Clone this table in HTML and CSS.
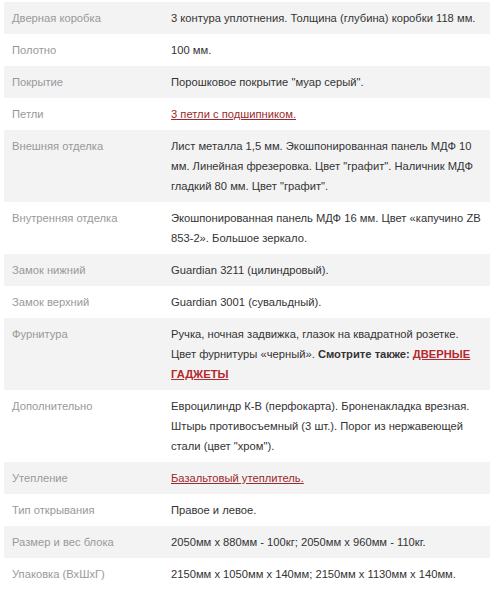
FILE: index.html
```html
<!DOCTYPE html>
<html lang="ru">
<head>
<meta charset="utf-8">
<link rel="stylesheet" href="styles.css">
</head>
<body>
<table class="specs">
<colgroup><col class="ck"><col class="cv"></colgroup>
<tr class="odd"><td class="k">Дверная коробка</td><td class="v">3 контура уплотнения. Толщина (глубина) коробки 118 мм.</td></tr>
<tr><td class="k">Полотно</td><td class="v">100 мм.</td></tr>
<tr class="odd"><td class="k">Покрытие</td><td class="v">Порошковое покрытие "муар серый".</td></tr>
<tr><td class="k">Петли</td><td class="v"><a class="lnk" href="#">3 петли с подшипником.</a></td></tr>
<tr class="odd"><td class="k">Внешняя отделка</td><td class="v">Лист металла 1,5 мм. Экошпонированная панель МДФ 10 мм. Линейная фрезеровка. Цвет "графит". Наличник МДФ гладкий 80 мм. Цвет "графит".</td></tr>
<tr><td class="k">Внутренняя отделка</td><td class="v">Экошпонированная панель МДФ 16 мм. Цвет «капучино ZB 853-2». Большое зеркало.</td></tr>
<tr class="odd"><td class="k">Замок нижний</td><td class="v">Guardian 3211 (цилиндровый).</td></tr>
<tr><td class="k">Замок верхний</td><td class="v">Guardian 3001 (сувальдный).</td></tr>
<tr class="odd"><td class="k">Фурнитура</td><td class="v">Ручка, ночная задвижка, глазок на квадратной розетке. Цвет фурнитуры «черный». <b>Смотрите также: <a class="lnk strong" href="#">ДВЕРНЫЕ ГАДЖЕТЫ</a></b></td></tr>
<tr><td class="k">Дополнительно</td><td class="v">Евроцилиндр К-В (перфокарта). Броненакладка врезная. Штырь противосъемный (3 шт.). Порог из нержавеющей стали (цвет "хром").</td></tr>
<tr class="odd"><td class="k">Утепление</td><td class="v"><a class="lnk" href="#">Базальтовый утеплитель.</a></td></tr>
<tr><td class="k">Тип открывания</td><td class="v">Правое и левое.</td></tr>
<tr class="odd"><td class="k">Размер и вес блока</td><td class="v">2050мм х 880мм - 100кг; 2050мм х 960мм - 110кг.</td></tr>
<tr><td class="k">Упаковка (ВхШхГ)</td><td class="v">2150мм х 1050мм х 140мм; 2150мм х 1130мм х 140мм.</td></tr>
</table>
</body>
</html>
```
FILE: styles.css
```css
html, body {
  margin: 0;
  background: #ffffff;
}
body {
  padding: 2px 1px 0 4px;
  font-family: "Liberation Sans", Arial, sans-serif;
  font-size: 11.2px;
  line-height: 20px;
  color: #333333;
}
.specs {
  width: 486px;
  table-layout: fixed;
  border-collapse: collapse;
  border-spacing: 0;
}
.ck {
  width: 159px;
}
.cv {
  width: 327px;
}
.specs td {
  padding: 6px 5px 6px 8px;
  vertical-align: top;
}
.specs tr.odd td {
  background: #f3f3f3;
}
.k {
  color: #999999;
}
.v {
  color: #333333;
}
.lnk {
  color: #9b2a2e;
  text-decoration: underline;
}
.lnk.strong {
  color: #b5282d;
  font-weight: bold;
}
b {
  font-weight: bold;
}
```
